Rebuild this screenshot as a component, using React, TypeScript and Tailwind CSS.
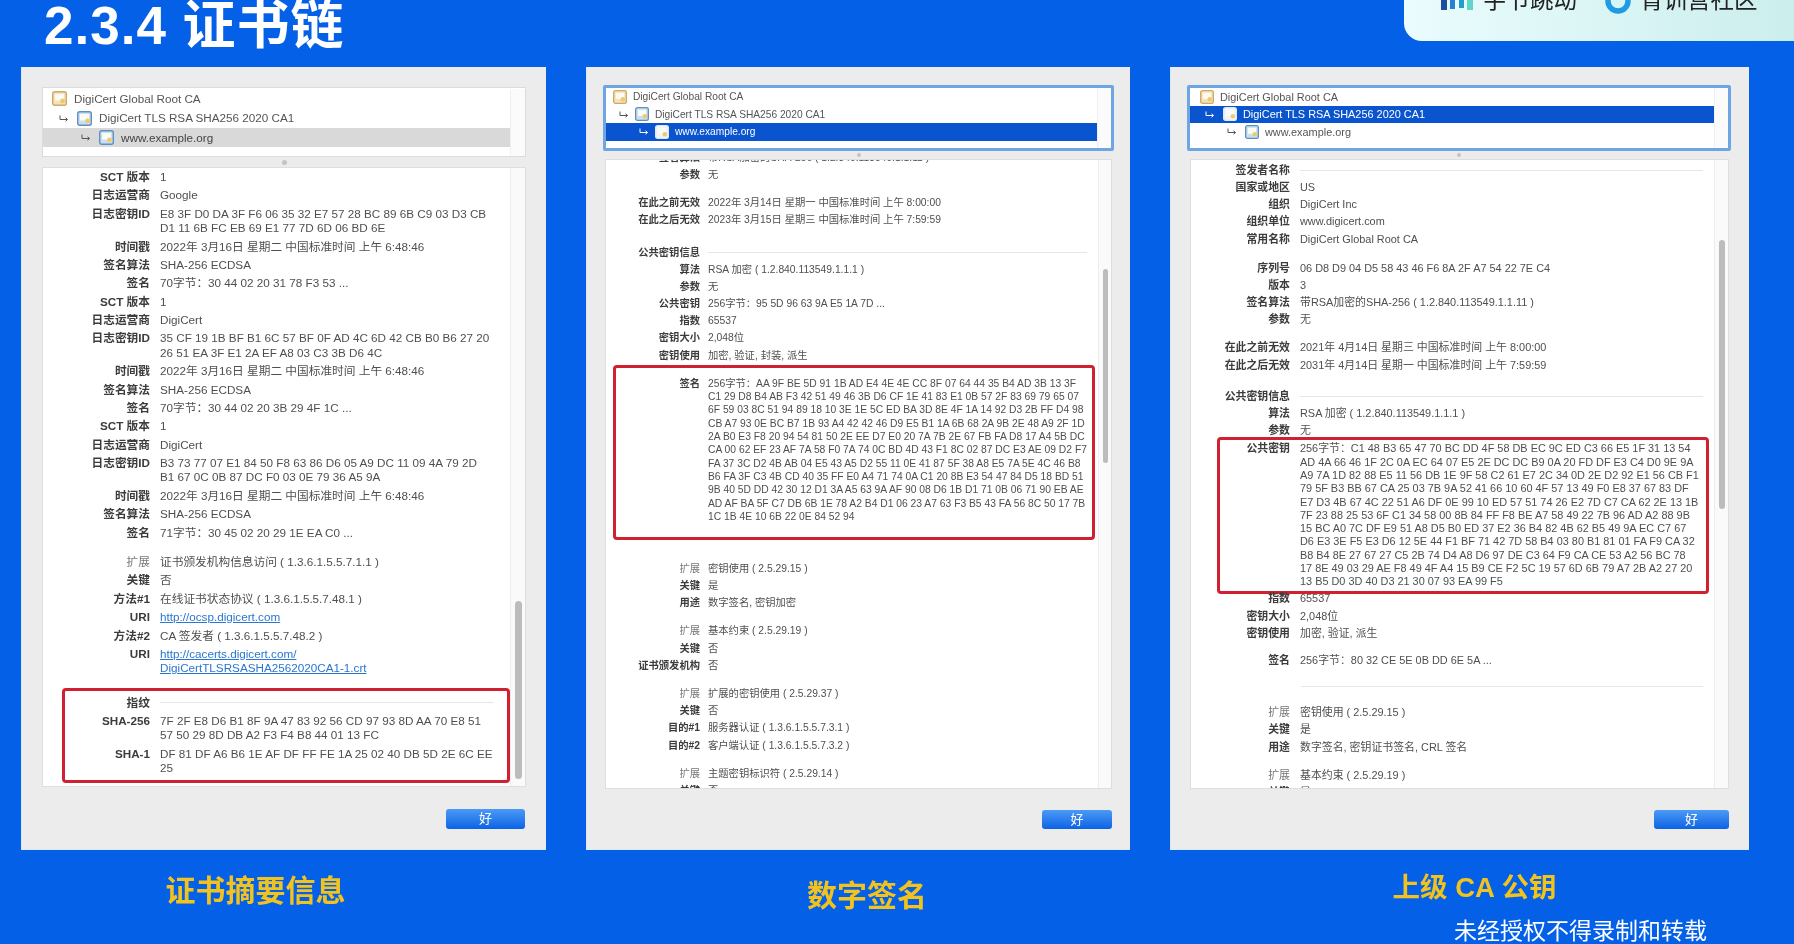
import React from "react";

type Item =
  | { k: string; v?: string | string[]; link?: boolean; rule?: boolean; tight?: boolean }
  | { gap: string }
  | { hr: string }
  | { red: Item[]; box: string; inner: string };

const A: Item[] = [
  { k: "SCT 版本", v: "1" },
  { k: "日志运营商", v: "Google" },
  { k: "日志密钥ID", v: ["E8 3F D0 DA 3F F6 06 35 32 E7 57 28 BC 89 6B C9 03 D3 CB", "D1 11 6B FC EB 69 E1 77 7D 6D 06 BD 6E"] },
  { k: "时间戳", v: "2022年 3月16日 星期二 中国标准时间 上午 6:48:46" },
  { k: "签名算法", v: "SHA-256 ECDSA" },
  { k: "签名", v: "70字节：30 44 02 20 31 78 F3 53 ..." },
  { k: "SCT 版本", v: "1" },
  { k: "日志运营商", v: "DigiCert" },
  { k: "日志密钥ID", v: ["35 CF 19 1B BF B1 6C 57 BF 0F AD 4C 6D 42 CB B0 B6 27 20", "26 51 EA 3F E1 2A EF A8 03 C3 3B D6 4C"] },
  { k: "时间戳", v: "2022年 3月16日 星期二 中国标准时间 上午 6:48:46" },
  { k: "签名算法", v: "SHA-256 ECDSA" },
  { k: "签名", v: "70字节：30 44 02 20 3B 29 4F 1C ..." },
  { k: "SCT 版本", v: "1" },
  { k: "日志运营商", v: "DigiCert" },
  { k: "日志密钥ID", v: ["B3 73 77 07 E1 84 50 F8 63 86 D6 05 A9 DC 11 09 4A 79 2D", "B1 67 0C 0B 87 DC F0 03 0E 79 36 A5 9A"] },
  { k: "时间戳", v: "2022年 3月16日 星期二 中国标准时间 上午 6:48:46" },
  { k: "签名算法", v: "SHA-256 ECDSA" },
  { k: "签名", v: "71字节：30 45 02 20 29 1E EA C0 ..." },
  { gap: "h-[11px]" },
  { k: "扩展", v: "证书颁发机构信息访问 ( 1.3.6.1.5.5.7.1.1 )", tight: true },
  { k: "关键", v: "否" },
  { k: "方法#1", v: "在线证书状态协议 ( 1.3.6.1.5.5.7.48.1 )" },
  { k: "URI", v: "http://ocsp.digicert.com", link: true },
  { k: "方法#2", v: "CA 签发者 ( 1.3.6.1.5.5.7.48.2 )" },
  { k: "URI", v: ["http://cacerts.digicert.com/", "DigiCertTLSRSASHA2562020CA1-1.crt"], link: true },
  { gap: "h-[10px]" },
  {
    red: [
      { k: "指纹", rule: true },
      { k: "SHA-256", v: ["7F 2F E8 D6 B1 8F 9A 47 83 92 56 CD 97 93 8D AA 70 E8 51", "57 50 29 8D DB A2 F3 F4 B8 44 01 13 FC"] },
      { k: "SHA-1", v: ["DF 81 DF A6 B6 1E AF DF FF FE 1A 25 02 40 DB 5D 2E 6C EE", "25"] },
    ],
    box: "ml-[19px] mr-0 pt-[3px] pb-[3px]",
    inner: "-ml-[22px]",
  },
];

const B: Item[] = [
  { k: "签名算法", v: "带RSA加密的SHA-256 ( 1.2.840.113549.1.1.11 )" },
  { k: "参数", v: "无" },
  { gap: "h-[11px]" },
  { k: "在此之前无效", v: "2022年 3月14日 星期一 中国标准时间 上午 8:00:00" },
  { k: "在此之后无效", v: "2023年 3月15日 星期三 中国标准时间 上午 7:59:59" },
  { gap: "h-[15px]" },
  { k: "公共密钥信息", rule: true },
  { k: "算法", v: "RSA 加密 ( 1.2.840.113549.1.1.1 )" },
  { k: "参数", v: "无" },
  { k: "公共密钥", v: "256字节：95 5D 96 63 9A E5 1A 7D ..." },
  { k: "指数", v: "65537" },
  { k: "密钥大小", v: "2,048位" },
  { k: "密钥使用", v: "加密, 验证, 封装, 派生" },
  {
    red: [
      {
        k: "签名",
        v: [
          "256字节：AA 9F BE 5D 91 1B AD E4 4E 4E CC 8F 07 64 44 35 B4 AD 3B 13 3F",
          "C1 29 D8 B4 AB F3 42 51 49 46 3B D6 CF 1E 41 83 E1 0B 57 2F 83 69 79 65 07",
          "6F 59 03 8C 51 94 89 18 10 3E 1E 5C ED BA 3D 8E 4F 1A 14 92 D3 2B FF D4 98",
          "CB A7 93 0E BC B7 1B 93 A4 42 42 46 D9 E5 B1 1A 6B 68 2A 9B 2E 48 A9 2F 1D",
          "2A B0 E3 F8 20 94 54 81 50 2E EE D7 E0 20 7A 7B 2E 67 FB FA D8 17 A4 5B DC",
          "CA 00 62 EF 23 AF 7A 58 F0 7A 74 0C BD 4D 43 F1 8C 02 87 DC E3 AE 09 D2 F7",
          "FA 37 3C D2 4B AB 04 E5 43 A5 D2 55 11 0E 41 87 5F 38 A8 E5 7A 5E 4C 46 B8",
          "B6 FA 3F C3 4B CD 40 35 FF E0 A4 71 74 0A C1 20 8B E3 54 47 84 D5 18 BD 51",
          "9B 40 5D DD 42 30 12 D1 3A A5 63 9A AF 90 08 D6 1B D1 71 0B 06 71 90 EB AE",
          "AD AF BA 5F C7 DB 6B 1E 78 A2 B4 D1 06 23 A7 63 F3 B5 43 FA 56 8C 50 17 7B",
          "1C 1B 4E 10 6B 22 0E 84 52 94",
        ],
      },
    ],
    box: "ml-[7px] mr-[3px] mt-[1px] pt-[7px] pb-[12px]",
    inner: "-ml-[10px]",
  },
  { gap: "h-[20px]" },
  { k: "扩展", v: "密钥使用 ( 2.5.29.15 )", tight: true },
  { k: "关键", v: "是" },
  { k: "用途", v: "数字签名, 密钥加密" },
  { gap: "h-[11px]" },
  { k: "扩展", v: "基本约束 ( 2.5.29.19 )", tight: true },
  { k: "关键", v: "否" },
  { k: "证书颁发机构", v: "否" },
  { gap: "h-[11px]" },
  { k: "扩展", v: "扩展的密钥使用 ( 2.5.29.37 )", tight: true },
  { k: "关键", v: "否" },
  { k: "目的#1", v: "服务器认证 ( 1.3.6.1.5.5.7.3.1 )" },
  { k: "目的#2", v: "客户端认证 ( 1.3.6.1.5.5.7.3.2 )" },
  { gap: "h-[11px]" },
  { k: "扩展", v: "主题密钥标识符 ( 2.5.29.14 )", tight: true },
  { k: "关键", v: "否" },
];

const C: Item[] = [
  { k: "签发者名称", rule: true },
  { k: "国家或地区", v: "US" },
  { k: "组织", v: "DigiCert Inc" },
  { k: "组织单位", v: "www.digicert.com" },
  { k: "常用名称", v: "DigiCert Global Root CA" },
  { gap: "h-[12px]" },
  { k: "序列号", v: "06 D8 D9 04 D5 58 43 46 F6 8A 2F A7 54 22 7E C4" },
  { k: "版本", v: "3" },
  { k: "签名算法", v: "带RSA加密的SHA-256 ( 1.2.840.113549.1.1.11 )" },
  { k: "参数", v: "无" },
  { gap: "h-[11px]" },
  { k: "在此之前无效", v: "2021年 4月14日 星期三 中国标准时间 上午 8:00:00" },
  { k: "在此之后无效", v: "2031年 4月14日 星期一 中国标准时间 上午 7:59:59" },
  { gap: "h-[14px]" },
  { k: "公共密钥信息", rule: true },
  { k: "算法", v: "RSA 加密 ( 1.2.840.113549.1.1.1 )" },
  { k: "参数", v: "无" },
  {
    red: [
      {
        k: "公共密钥",
        v: [
          "256字节：C1 48 B3 65 47 70 BC DD 4F 58 DB EC 9C ED C3 66 E5 1F 31 13 54",
          "AD 4A 66 46 1F 2C 0A EC 64 07 E5 2E DC DC B9 0A 20 FD DF E3 C4 D0 9E 9A",
          "A9 7A 1D 82 88 E5 11 56 DB 1E 9F 58 C2 61 E7 2C 34 0D 2E D2 92 E1 56 CB F1",
          "79 5F B3 BB 67 CA 25 03 7B 9A 52 41 66 10 60 4F 57 13 49 F0 E8 37 67 83 DF",
          "E7 D3 4B 67 4C 22 51 A6 DF 0E 99 10 ED 57 51 74 26 E2 7D C7 CA 62 2E 13 1B",
          "7F 23 88 25 53 6F C1 34 58 00 8B 84 FF F8 BE A7 58 49 22 7B 96 AD A2 88 9B",
          "15 BC A0 7C DF E9 51 A8 D5 B0 ED 37 E2 36 B4 82 4B 62 B5 49 9A EC C7 67",
          "D6 E3 3E F5 E3 D6 12 5E 44 F1 BF 71 42 7D 58 B4 03 80 B1 81 01 FA F9 CA 32",
          "B8 B4 8E 27 67 27 C5 2B 74 D4 A8 D6 97 DE C3 64 F9 CA CE 53 A2 56 BC 78",
          "17 8E 49 03 29 AE F8 49 4F A4 15 B9 CE F2 5C 19 57 6D 6B 79 A7 2B A2 27 20",
          "13 B5 D0 3D 40 D3 21 30 07 93 EA 99 F5",
        ],
      },
    ],
    box: "ml-[26px] mr-[5px] -mt-[2px] -mb-[3px]",
    inner: "-ml-[29px]",
  },
  { k: "指数", v: "65537" },
  { k: "密钥大小", v: "2,048位" },
  { k: "密钥使用", v: "加密, 验证, 派生" },
  { gap: "h-[10px]" },
  { k: "签名", v: "256字节：80 32 CE 5E 0B DD 6E 5A ..." },
  { gap: "h-[17px]" },
  { hr: "ml-[110px] mr-[11px]" },
  { gap: "h-[17px]" },
  { k: "扩展", v: "密钥使用 ( 2.5.29.15 )", tight: true },
  { k: "关键", v: "是" },
  { k: "用途", v: "数字签名, 密钥证书签名, CRL 签名" },
  { gap: "h-[11px]" },
  { k: "扩展", v: "基本约束 ( 2.5.29.19 )", tight: true },
  { k: "关键", v: "是" },
];

type Size = { row: string; label: string; gap: string; rule: string };
const BIG: Size = { row: "text-[11.7px] leading-[14.3px] py-[2.05px]", label: "w-[107px]", gap: "ml-[10px]", rule: "mr-[13px]" };
const MID: Size = { row: "text-[10.3px] leading-[13.3px] py-[1.95px]", label: "w-[94px]", gap: "ml-[8px]", rule: "mr-[11px]" };
const WIDE: Size = { row: "text-[10.9px] leading-[13.3px] py-[1.95px]", label: "w-[99px]", gap: "ml-[10px]", rule: "mr-[11px]" };

function Rows({ items, s }: { items: Item[]; s: Size }) {
  return (
    <>
      {items.map((it, i) => {
        if ("gap" in it) return <div key={i} className={it.gap} />;
        if ("hr" in it) return <div key={i} className={`border-t border-[#e6e6e6] ${it.hr}`} />;
        if ("red" in it)
          return (
            <div key={i} className={`border-[3px] border-[#d1202f] rounded-[4px] ${it.box}`}>
              <div className={it.inner}>
                <Rows items={it.red} s={s} />
              </div>
            </div>
          );
        const lines = it.v === undefined ? [] : Array.isArray(it.v) ? it.v : [it.v];
        return (
          <div key={i} className={`flex ${s.row}`}>
            <div className={`${s.label} shrink-0 text-right whitespace-nowrap ${it.tight ? "font-normal text-[#777]" : "font-bold text-[#3c3c3c]"}`}>
              {it.k}
            </div>
            <div className={`${s.gap} flex-1 min-w-0 whitespace-nowrap ${it.link ? "text-[#2a76cf] underline" : "text-[#4f4f4f]"}`}>
              {it.rule ? (
                <div className={`border-t border-[#e6e6e6] mt-[6px] ${s.rule}`} />
              ) : (
                lines.map((l, j) => <div key={j}>{l}</div>)
              )}
            </div>
          </div>
        );
      })}
    </>
  );
}

function CertIcon({ kind, cls }: { kind: "root" | "leaf" | "sel"; cls: string }) {
  const edge = kind === "root" ? "#d0a868" : kind === "leaf" ? "#5f8fc0" : "#dfe9f7";
  const fill = kind === "root" ? "#f6e2b8" : kind === "leaf" ? "#c9e0f0" : "#f1f5fa";
  return (
    <svg viewBox="0 0 15 15" className={cls}>
      <rect x="0.7" y="0.7" width="13.6" height="13.6" rx="2" fill={fill} stroke={edge} strokeWidth="1.4" />
      <rect x="3" y="3" width="9" height="6.5" fill="#fbfbf6" />
      <circle cx="10.5" cy="10" r="2.4" fill="#eeca6e" />
    </svg>
  );
}

function Hook({ light }: { light?: boolean }) {
  return (
    <svg viewBox="0 0 10 7" className="w-[10px] h-[7px]" fill="none" stroke={light ? "#ffffff" : "#555555"} strokeWidth="1">
      <path d="M1 0.5V4.5H8" />
      <path d="M6.5 2.8L8.6 4.5L6.5 6.2" />
    </svg>
  );
}

type TreeRow = { name: string; pl: string; depth: number; selected?: string };

function Tree({ rows, rowCls, icon, hook, label }: { rows: TreeRow[]; rowCls: string; icon: string; hook: string; label: string }) {
  return (
    <>
      {rows.map((r, i) => (
        <div key={i} className={`flex items-center whitespace-nowrap ${rowCls} ${r.pl} ${r.selected || "text-[#555]"}`}>
          {r.depth > 0 && (
            <div className={`${hook} shrink-0`}>
              <Hook light={r.selected?.includes("text-white")} />
            </div>
          )}
          <CertIcon
            kind={r.depth === 0 ? "root" : r.selected?.includes("text-white") ? "sel" : "leaf"}
            cls={`${icon} shrink-0`}
          />
          <span className={label}>{r.name}</span>
        </div>
      ))}
    </>
  );
}

function Track({ cls, thumb }: { cls: string; thumb: string }) {
  return (
    <div className={`shrink-0 bg-[#fafafa] border-l border-[#ececec] ${cls}`}>
      <div className={`rounded-full bg-[#bcbcbc] mx-auto ${thumb}`} />
    </div>
  );
}

function OkButton({ cls }: { cls: string }) {
  return (
    <div className={`flex items-center justify-center rounded-[3px] bg-gradient-to-b from-[#4a9af6] to-[#0a62e4] text-white text-[13px] ${cls}`}>
      好
    </div>
  );
}

export default function App() {
  return (
    <div className="w-[1794px] h-[944px] overflow-hidden bg-[#0460e6] flex flex-col font-['Liberation_Sans','Noto_Sans_CJK_SC',sans-serif]">
      <header className="h-[67px] shrink-0 flex justify-between items-start overflow-hidden">
        <h1 className="ml-[44px] -mt-[1px] text-[53px] leading-[54px] font-bold text-white tracking-[1px] whitespace-nowrap blur-[0.6px]">
          2.3.4 证书链
        </h1>
        <div className="w-[390px] h-[41px] rounded-bl-[18px] bg-gradient-to-r from-[#ebfcfd] to-[#cbeeed] overflow-hidden flex items-start pl-[36px] blur-[0.5px]">
          <svg viewBox="0 0 34 14" className="w-[34px] h-[14px] shrink-0">
            <rect x="1" y="0" width="6" height="10" fill="#1d4f9c" />
            <rect x="10" y="0" width="5" height="9" fill="#2a7fd0" />
            <rect x="19" y="0" width="5" height="8" fill="#1f9fd0" />
            <rect x="27" y="0" width="6" height="10" fill="#5fd6c8" />
          </svg>
          <span className="ml-[9px] -mt-[12px] text-[23.5px] leading-[24px] text-[#222] whitespace-nowrap">字节跳动</span>
          <svg viewBox="0 0 26 14" className="ml-[28px] w-[26px] h-[14px] shrink-0">
            <circle cx="13" cy="1" r="10" fill="none" stroke="#1f9be6" strokeWidth="5.5" />
          </svg>
          <span className="ml-[9px] -mt-[12px] text-[23.5px] leading-[24px] text-[#222] whitespace-nowrap">青训营社区</span>
        </div>
      </header>

      <main className="flex items-start pl-[21px] gap-[40px]">
        {/* Left */}
        <section className="w-[525px] shrink-0">
          <div className="h-[783px] bg-[#ececec] border-l border-b border-[#dbe8f7] px-[20px] pt-[20px] blur-[0.6px]">
            <div className="h-[70px] bg-white border border-[#dcdcdc] flex text-[11.7px] pt-[1px]">
              <div className="flex-1">
                <Tree
                  rowCls="h-[19.4px]"
                  icon="w-[15px] h-[15px]"
                  hook="w-[18px]"
                  label="ml-[7px]"
                  rows={[
                    { name: "DigiCert Global Root CA", pl: "pl-[9px]", depth: 0 },
                    { name: "DigiCert TLS RSA SHA256 2020 CA1", pl: "pl-[16px]", depth: 1 },
                    { name: "www.example.org", pl: "pl-[38px]", depth: 2, selected: "bg-[#d9d9d9] text-[#444]" },
                  ]}
                />
              </div>
              <div className="w-[15px] shrink-0 border-l border-[#f0f0f0] bg-[#fbfbfb]" />
            </div>
            <div className="h-[10px] flex items-center justify-center">
              <div className="w-[5px] h-[5px] rounded-full bg-[#c4c4c4]" />
            </div>
            <div className="h-[620px] bg-white border border-[#dedede] flex overflow-hidden">
              <div className="flex-1 min-w-0">
                <Rows items={A} s={BIG} />
              </div>
              <Track cls="w-[15px]" thumb="w-[7px] h-[178px] mt-[433px]" />
            </div>
            <div className="flex justify-end mt-[22px] pr-[1px]">
              <OkButton cls="w-[79px] h-[20px]" />
            </div>
          </div>
          <div className="pr-[56px] mt-[23px] text-center text-[30px] leading-[36px] font-bold text-[#f2c21f] blur-[0.6px]">证书摘要信息</div>
        </section>

        {/* Middle */}
        <section className="w-[544px] shrink-0">
          <div className="h-[783px] bg-[#ececec] border-l border-b border-[#dbe8f7] px-[16px] pt-[18px] blur-[0.6px]">
            <div className="h-[66px] bg-white border-[3px] border-[#6fa5e3] rounded-[2px] flex text-[10.2px]">
              <div className="flex-1">
                <Tree
                  rowCls="h-[17.6px]"
                  icon="w-[14px] h-[14px]"
                  hook="w-[16px]"
                  label="ml-[6px]"
                  rows={[
                    { name: "DigiCert Global Root CA", pl: "pl-[7px]", depth: 0 },
                    { name: "DigiCert TLS RSA SHA256 2020 CA1", pl: "pl-[13px]", depth: 1 },
                    { name: "www.example.org", pl: "pl-[33px]", depth: 2, selected: "bg-[#0a55cf] text-white" },
                  ]}
                />
              </div>
              <div className="w-[14px] shrink-0 border-l border-[#f0f0f0] bg-[#fbfbfb]" />
            </div>
            <div className="h-[8px] flex items-center justify-center">
              <div className="w-[4px] h-[4px] rounded-full bg-[#c4c4c4]" />
            </div>
            <div className="h-[630px] mx-[2px] bg-white border border-[#dedede] flex overflow-hidden">
              <div className="flex-1 min-w-0 -mt-[11px]">
                <Rows items={B} s={MID} />
              </div>
              <Track cls="w-[13px]" thumb="w-[5px] h-[194px] mt-[109px]" />
            </div>
            <div className="flex justify-end mt-[21px] pr-[2px]">
              <OkButton cls="w-[70px] h-[19px]" />
            </div>
          </div>
          <div className="pl-[18px] mt-[28px] text-center text-[30px] leading-[36px] font-bold text-[#f2c21f] blur-[0.6px]">数字签名</div>
        </section>

        {/* Right */}
        <section className="w-[579px] shrink-0">
          <div className="h-[783px] bg-[#ececec] border-l border-b border-[#dbe8f7] pl-[16px] pr-[18px] pt-[18px] blur-[0.6px]">
            <div className="h-[66px] bg-white border-[3px] border-[#6fa5e3] rounded-[2px] flex text-[10.9px]">
              <div className="flex-1">
                <Tree
                  rowCls="h-[17.6px]"
                  icon="w-[14px] h-[14px]"
                  hook="w-[18px]"
                  label="ml-[6px]"
                  rows={[
                    { name: "DigiCert Global Root CA", pl: "pl-[10px]", depth: 0 },
                    { name: "DigiCert TLS RSA SHA256 2020 CA1", pl: "pl-[15px]", depth: 1, selected: "bg-[#0a55cf] text-white" },
                    { name: "www.example.org", pl: "pl-[37px]", depth: 2 },
                  ]}
                />
              </div>
              <div className="w-[14px] shrink-0 border-l border-[#f0f0f0] bg-[#fbfbfb]" />
            </div>
            <div className="h-[8px] flex items-center justify-center">
              <div className="w-[4px] h-[4px] rounded-full bg-[#c4c4c4]" />
            </div>
            <div className="h-[630px] ml-[3px] mr-[2px] bg-white border border-[#dedede] flex overflow-hidden">
              <div className="flex-1 min-w-0 pt-[2px]">
                <Rows items={C} s={WIDE} />
              </div>
              <Track cls="w-[14px]" thumb="w-[6px] h-[269px] mt-[80px]" />
            </div>
            <div className="flex justify-end mt-[21px] pr-[2px]">
              <OkButton cls="w-[75px] h-[19px]" />
            </div>
          </div>
          <div className="pl-[30px] mt-[20px] text-center text-[27.5px] leading-[36px] font-bold text-[#f2c21f] blur-[0.6px]">上级 CA 公钥</div>
          <div className="pl-[284px] mt-[11px] text-[23px] leading-[28px] text-white whitespace-nowrap blur-[0.5px]">未经授权不得录制和转载</div>
        </section>
      </main>
    </div>
  );
}
